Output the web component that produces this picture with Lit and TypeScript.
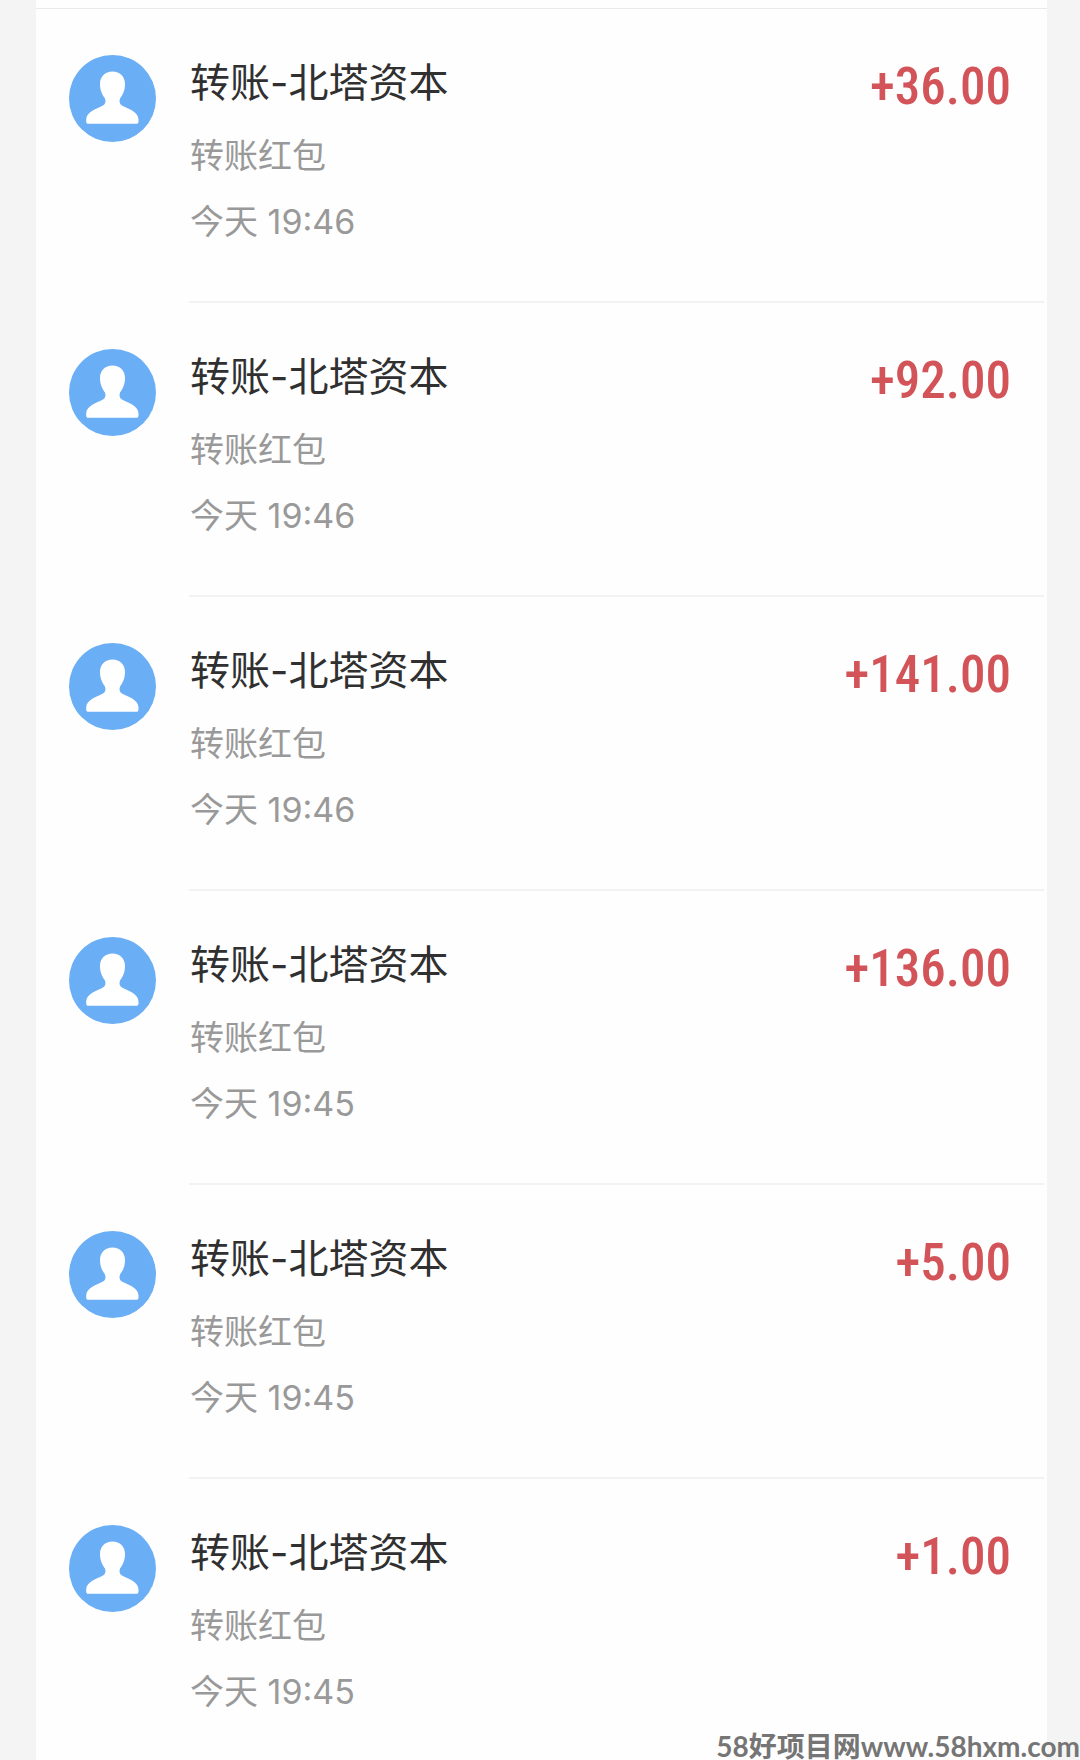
import { LitElement, html, css } from "lit";
import { customElement, property } from "lit/decorators.js";

interface Transfer {
  title: string;
  note: string;
  time: string;
  amount: string;
}

const transfers: Transfer[] = [
  ["19:46", "+36.00"],
  ["19:46", "+92.00"],
  ["19:46", "+141.00"],
  ["19:45", "+136.00"],
  ["19:45", "+5.00"],
  ["19:45", "+1.00"],
].map(([clock, amount]) => ({
  title: "转账-北塔资本",
  note: "转账红包",
  time: `今天 ${clock}`,
  amount,
}));

@customElement("user-avatar")
export class UserAvatar extends LitElement {
  static styles = css`
    :host {
      display: block;
      width: 87px;
      height: 87px;
    }
    .disc {
      display: block;
      width: 100%;
      height: 100%;
    }
  `;

  render() {
    return html`
      <svg class="disc" viewBox="0 0 87 87" aria-hidden="true">
        <circle cx="43.5" cy="43.5" r="43.5" fill="#6aaef5" />
        <path
          fill="#fff"
          d="M43.5 16.5C51 16.5 56 21.500 56 29C56 36 53.500 40 51 43.500C50 46.500 50.500 49 53 50.500C59 53.500 69.500 57 69.500 64.500V66.500C69.500 68 68.700 68.800 67.200 68.800H19.500C18 68.800 17.200 68 17.200 66.500V64.500C17.200 57 28 53.500 34 50.500C36.500 49 37 46.500 36 43.500C33.500 40 31 36 31 29C31 21.500 36 16.500 43.500 16.500Z"
        />
      </svg>
    `;
  }
}

@customElement("transfer-row")
export class TransferRow extends LitElement {
  @property({ attribute: false }) item!: Transfer;

  static styles = css`
    :host {
      display: block;
    }
    .row {
      display: flex;
      align-items: flex-start;
      gap: 33px;
      padding: 0 3px 0 33px;
    }
    .avatar {
      flex: none;
      margin-top: 46px;
    }
    .body {
      flex: 1;
      display: flex;
      justify-content: space-between;
      padding: 46px 33px 58px 1px;
      border-bottom: 2px solid #f2f2f2;
    }
    :host(:last-child) .body {
      border-bottom: 0;
      padding-bottom: 0;
    }
    .details {
      display: flex;
      flex-direction: column;
      gap: 24px;
    }
    .title {
      margin: 0;
      font-size: 40px;
      font-weight: 400;
      line-height: 56px;
      color: #303030;
    }
    .line {
      margin: 0;
      font-size: 34px;
      line-height: 42px;
      color: #999;
    }
    .amount {
      font-family: "Roboto Condensed", "Liberation Sans Narrow", Roboto, sans-serif;
      font-size: 51px;
      font-weight: 500;
      line-height: 64px;
      color: #d25358;
    }
  `;

  render() {
    const { title, note, time, amount } = this.item;
    return html`
      <div class="row">
        <user-avatar class="avatar"></user-avatar>
        <div class="body">
          <div class="details">
            <h2 class="title">${title}</h2>
            <p class="line">${note}</p>
            <p class="line">${time}</p>
          </div>
          <span class="amount">${amount}</span>
        </div>
      </div>
    `;
  }
}

@customElement("app-root")
export class AppRoot extends LitElement {
  static styles = css`
    :host {
      display: block;
      position: relative;
      box-sizing: border-box;
      min-height: 100vh;
      padding: 0 33px 0 36px;
      background: #f4f4f4;
      font-family: Inter, "Noto Sans CJK SC", sans-serif;
    }
    .card {
      box-sizing: border-box;
      min-height: 100vh;
      padding-top: 8px;
      background: #fefefe;
    }
    .list {
      border-top: 1px solid #e9e9e9;
    }
    .watermark {
      position: absolute;
      right: 0;
      bottom: 0;
      font-family: Lato, "Noto Sans CJK SC", sans-serif;
      font-size: 28px;
      font-weight: 700;
      line-height: 28px;
      white-space: nowrap;
      color: #757575;
    }
  `;

  render() {
    return html`
      <main class="card">
        <div class="list">
          ${transfers.map((item) => html`<transfer-row .item=${item}></transfer-row>`)}
        </div>
      </main>
      <span class="watermark">58好项目网www.58hxm.com</span>
    `;
  }
}
